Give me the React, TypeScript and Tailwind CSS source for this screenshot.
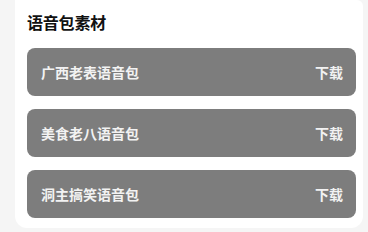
import React from 'react';

const packs = ['广西老表语音包', '美食老八语音包', '洞主搞笑语音包'];

export default function App() {
  return (
    <div
      className="w-[368px] h-[232px] overflow-hidden bg-[#f5f5f5] pl-[15px] pr-[5px]"
      style={{ fontFamily: '"Noto Sans CJK SC", "Noto Sans", sans-serif' }}
    >
      <div className="bg-white rounded-b-xl rounded-tr-md pl-3 pr-[7px] pt-[11px] pb-[10px]">
        <h2 className="text-[16px] leading-[22px] font-bold text-[#111] tracking-[-0.2px]">语音包素材</h2>
        <div className="mt-[15px] flex flex-col gap-[13px]">
          {packs.map((name) => (
            <div
              key={name}
              className="h-[48px] rounded-lg bg-[#7d7d7d] flex items-center justify-between pl-[14px] pr-[13px] text-[14px] font-bold text-[#f2f2f2]"
            >
              <span>{name}</span>
              <span>下载</span>
            </div>
          ))}
        </div>
      </div>
    </div>
  );
}
